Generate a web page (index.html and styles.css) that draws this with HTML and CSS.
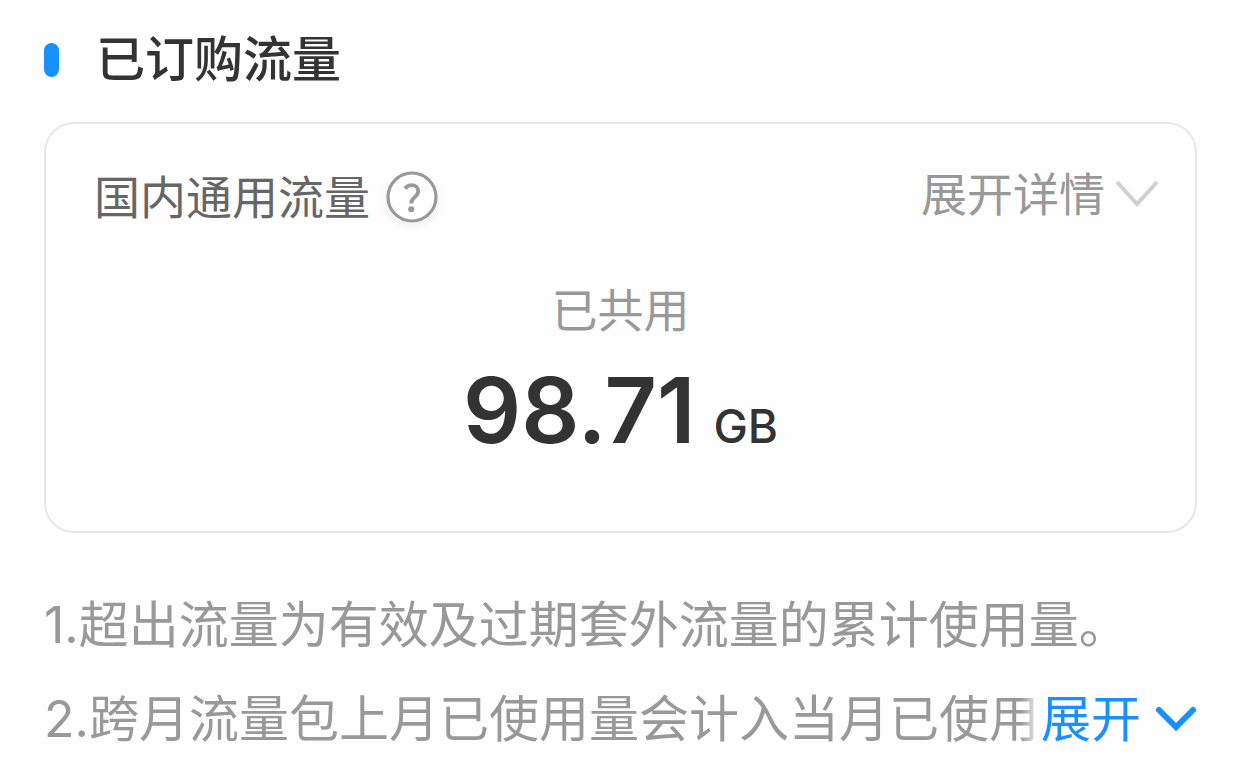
FILE: index.html
```
<!DOCTYPE html>
<html lang="zh-CN">
<head>
    <meta charset="UTF-8">
    <meta name="viewport" content="width=device-width, initial-scale=1.0">
    <title>已订购流量</title>
    <link rel="stylesheet" href="styles.css">
</head>
<body>

    <main class="usage">
        <h1 class="usage-title">已订购流量</h1>

        <section class="card">
            <div class="card-header">
                <h2>国内通用流量</h2>
                <button type="button" class="help" aria-label="说明">
                    <svg viewBox="0 0 52 52" fill="none" stroke="#999" aria-hidden="true">
                        <circle cx="26" cy="26" r="24" stroke-width="3.200"/>
                        <path d="M19 17.500C21 15 23 14.200 25.500 14.200c4.200 0 6.700 2.300 6.700 6.100 0 5.200-7 6.200-7 12.200" stroke-width="3.800"/>
                        <circle cx="25.200" cy="38.200" r="3" fill="#999" stroke="none"/>
                    </svg>
                </button>
                <button type="button" class="details">
                    展开详情
                    <svg viewBox="0 0 44 28" fill="none" stroke="#d0d0d0" stroke-width="4" aria-hidden="true">
                        <path d="M2 2l20 22L42 2"/>
                    </svg>
                </button>
            </div>

            <div class="total">
                <p class="total-label">已共用</p>
                <p class="total-value">98.71<span>GB</span></p>
            </div>
        </section>

        <div class="notes">
            <p>1.超出流量为有效及过期套外流量的累计使用量。</p>
            <div class="notes-last">
                <p>2.跨月流量包上月已使用量会计入当月已使用量</p>
                <button type="button" class="expand">
                    展开
                    <svg viewBox="0 0 42 26" fill="none" stroke="#1990ff" stroke-width="6" stroke-linecap="round" aria-hidden="true">
                        <path d="M4 4l17 17L38 4"/>
                    </svg>
                </button>
            </div>
        </div>
    </main>

</body>
</html>
```

FILE: styles.css
```
body {
    margin: 0;
    background-color: #fefefe;
    color: #333;
    font-family: Inter, "Noto Sans CJK SC", sans-serif;
}

h1, h2, p {
    margin: 0;
    font-weight: 400;
}

button {
    padding: 0;
    border: none;
    background: none;
    font-family: inherit;
    cursor: pointer;
}

.usage {
    padding: 24px 43px 0 44px;
}

.usage-title {
    display: flex;
    align-items: center;
    gap: 37px;
    font-size: 49px;
    font-weight: 500;
    line-height: 72px;
}

.usage-title::before {
    content: "";
    width: 15px;
    height: 34px;
    border-radius: 8px;
    background-color: #1990ff;
}

.card {
    margin-top: 26px;
    padding: 40px 36px 39px 48px;
    border: 2px solid #e8e8e8;
    border-radius: 30px;
}

.card-header {
    display: flex;
    align-items: center;
}

.card-header h2 {
    color: #666;
    font-size: 46px;
    line-height: 66px;
}

.help {
    width: 52px;
    height: 52px;
    margin-left: 16px;
    border-radius: 50%;
    box-shadow: 0 4px 8px rgba(0, 0, 0, 0.06);
}

.help svg {
    display: block;
}

.details {
    display: flex;
    align-items: center;
    align-self: flex-start;
    gap: 10px;
    margin-left: auto;
    color: #999;
    font-size: 46px;
    line-height: 60px;
}

.details svg {
    width: 44px;
    height: 28px;
}

.total {
    margin-top: 46px;
    padding-right: 12px;
    text-align: center;
}

.total-label {
    color: #999;
    font-size: 46px;
    line-height: 68px;
}

.total-value {
    display: flex;
    justify-content: center;
    align-items: baseline;
    gap: 18px;
    font-size: 91px;
    font-weight: 600;
    line-height: 132px;
}

.total-value span {
    font-size: 46px;
    font-weight: 500;
}

.notes {
    margin-top: 45px;
    color: #999;
    font-size: 50px;
    line-height: 94px;
}

.notes p {
    overflow: hidden;
    white-space: nowrap;
}

.notes-last {
    display: flex;
    align-items: center;
}

/* fades out the end of the last line */
.notes-last p {
    flex: 1;
    min-width: 0;
    -webkit-mask-image: linear-gradient(to left, transparent, #000 20px);
    mask-image: linear-gradient(to left, transparent, #000 20px);
}

.expand {
    display: flex;
    align-items: center;
    gap: 14px;
    color: #1990ff;
    font-size: 50px;
    line-height: 94px;
}

.expand svg {
    width: 42px;
    height: 26px;
}
```
